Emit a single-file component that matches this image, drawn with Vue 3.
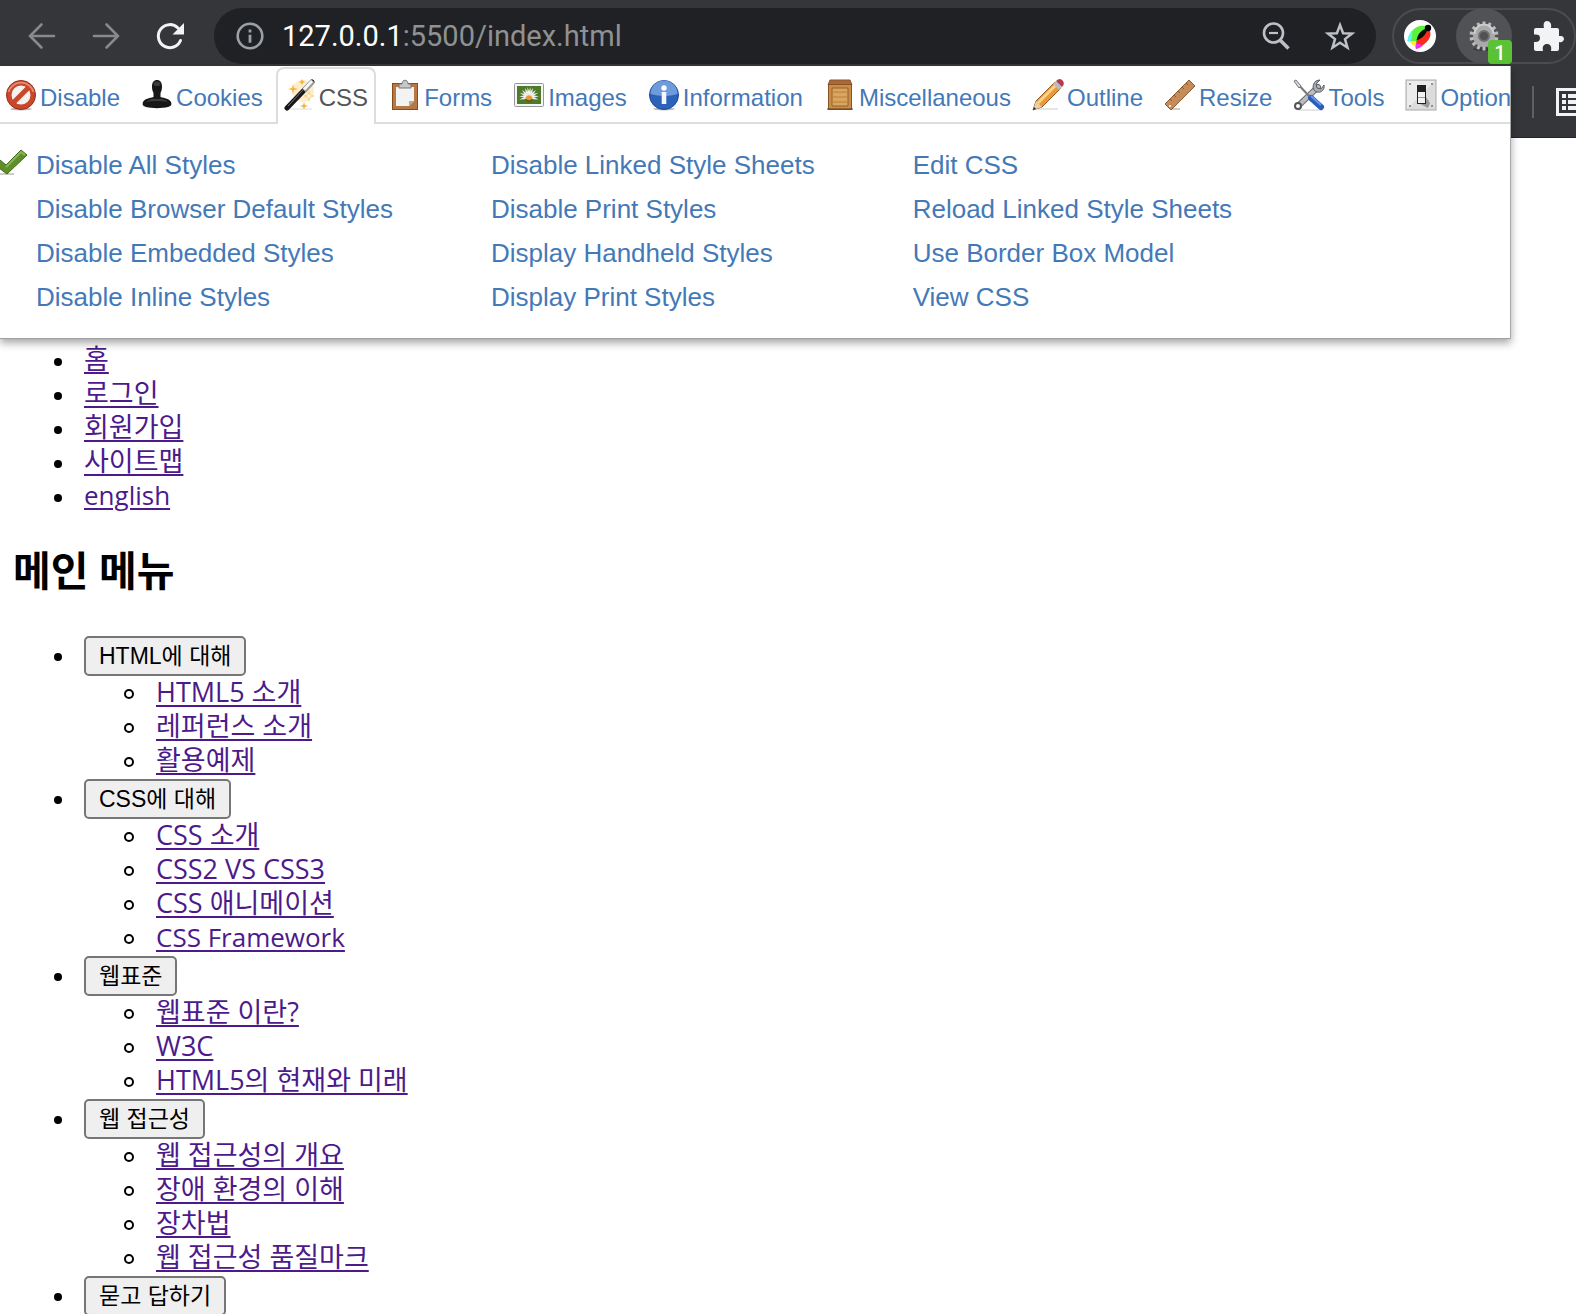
<script setup>
const tabs = ['Disable', 'Cookies', 'CSS', 'Forms', 'Images', 'Information', 'Miscellaneous', 'Outline', 'Resize', 'Tools', 'Options']

const features = [
  ['Disable All Styles', 'Disable Browser Default Styles', 'Disable Embedded Styles', 'Disable Inline Styles'],
  ['Disable Linked Style Sheets', 'Disable Print Styles', 'Display Handheld Styles', 'Display Print Styles'],
  ['Edit CSS', 'Reload Linked Style Sheets', 'Use Border Box Model', 'View CSS'],
]

const utility = [
  { text: '홈' },
  { text: '로그인' },
  { text: '회원가입' },
  { text: '사이트맵' },
  { text: 'english', lang: 'en' },
]

const menu = [
  { title: 'HTML에 대해', items: [{ text: 'HTML5 소개' }, { text: '레퍼런스 소개' }, { text: '활용예제' }] },
  { title: 'CSS에 대해', items: [{ text: 'CSS 소개' }, { text: 'CSS2 VS CSS3' }, { text: 'CSS 애니메이션' }, { text: 'CSS Framework', lang: 'en' }] },
  { title: '웹표준', items: [{ text: '웹표준 이란?' }, { text: 'W3C' }, { text: 'HTML5의 현재와 미래' }] },
  { title: '웹 접근성', items: [{ text: '웹 접근성의 개요' }, { text: '장애 환경의 이해' }, { text: '장차법' }, { text: '웹 접근성 품질마크' }] },
  { title: '묻고 답하기', items: [] },
]

const teeth = Array.from({ length: 14 }, (_, i) => (i * 360) / 14)
const petals = [-105, -85, -65, -45, -25, -8, 8, 25, 45, 65, 85, 105]
</script>

<template>
  <div class="window">
    <header class="chrome">
      <div class="toolbar">
        <button class="nav-button" aria-label="Back">
          <svg viewBox="0 0 32 32"><path d="M28 16H4M15.500 4.500L4 16l11.500 11.500" fill="none" stroke="#88898c" stroke-width="2.600" stroke-linecap="round" /></svg>
        </button>
        <button class="nav-button" aria-label="Forward">
          <svg viewBox="0 0 32 32"><path d="M4 16h24M16.500 4.500L28 16 16.500 27.500" fill="none" stroke="#88898c" stroke-width="2.600" stroke-linecap="round" /></svg>
        </button>
        <button class="nav-button" aria-label="Reload">
          <svg viewBox="0 0 32 32"><path d="M26.500 20.500A11.500 11.500 0 1 1 24 8" fill="none" stroke="#f1f3f4" stroke-width="3" stroke-linecap="round" /><path d="M30 3v11.500H18.500z" fill="#f1f3f4" /></svg>
        </button>

        <div class="address">
          <svg class="icon28" viewBox="0 0 28 28"><circle cx="14" cy="14" r="12.300" fill="none" stroke="#9aa0a6" stroke-width="2.600" /><path d="M12.600 7.500h2.800v3h-2.800zM12.600 12.800h2.800v8h-2.800z" fill="#9aa0a6" /></svg>
          <span class="url"><b>127.0.0.1</b>:5500/index.html</span>
          <button class="address-button" aria-label="Zoom">
            <svg viewBox="0 0 32 32"><circle cx="13.500" cy="13" r="9.500" fill="none" stroke="#bdc1c6" stroke-width="2.600" /><path d="M9 13h9" stroke="#bdc1c6" stroke-width="2.200" /><path d="M20 20l8.500 8.500" stroke="#bdc1c6" stroke-width="3.600" /></svg>
          </button>
          <button class="address-button" aria-label="Bookmark">
            <svg viewBox="0 0 32 32"><path d="M16 5l3.100 8.300 8.900.3-7 5.500 2.500 8.600L16 22.800l-7.500 4.900 2.500-8.600-7-5.500 8.900-.3z" fill="none" stroke="#bdc1c6" stroke-width="2.500" /></svg>
          </button>
        </div>

        <div class="extensions">
          <button class="ext" aria-label="Color picker">
            <svg viewBox="0 0 32 32" class="icon32">
              <circle cx="16" cy="16" r="16" fill="#fff" />
              <path d="M24 7C15 3 6 9 3.500 21l8 2C18 20 22 14 24 7z" fill="#5cf23c" />
              <path d="M3.500 21C4 16 5.500 13 8 10.500c.5 4 0 7-1 11z" fill="#5ff4f1" />
              <path d="M25 8c4 8 0 15-13 21-2-6 3-14 13-21z" fill="#fb2a1c" />
              <path d="M6 21.500l6-.5v5.500c-3-1-5-2.500-6-5z" fill="#ffee2d" />
              <path d="M12 29c-.5-2-.3-4 0-6l7 2.500c-2 2-4.500 3-7 3.500z" fill="#f32df5" />
              <path d="M24 8c-6 1.500-10.500 5.500-11.500 12.500C19 18 22.500 13.500 24 8z" fill="#0a0a0a" />
              <circle cx="24" cy="8" r="3.200" />
            </svg>
          </button>
          <button class="ext active" aria-label="Web Developer">
            <svg viewBox="0 0 32 32" class="icon32">
              <ellipse cx="16" cy="29" rx="11" ry="2" fill="#3d3d40" />
              <g transform="translate(16 16)">
                <rect v-for="a in teeth" :key="a" x="-1.500" y="-14.500" width="3" height="6" fill="#bcbcbc" :transform="`rotate(${a})`" />
                <circle r="8" fill="none" stroke="#a9a9a9" stroke-width="6" />
                <circle r="5" fill="none" stroke="#6f6f6f" stroke-width="2" />
                <path d="M-9.500-2A9.500 9.500 0 0 1 9.500-2" fill="none" stroke="#cfcfcf" stroke-width="2" />
              </g>
            </svg>
            <span class="badge">1</span>
          </button>
          <button class="ext" aria-label="Extensions">
            <svg viewBox="0 0 32 32" class="icon32"><path d="M4 8h8c-1-4 0-7 3-7s5 3 4 7h6q2 0 2 2v6c4-.5 5 1.500 5 3s-2 4-5 3v7q0 2-2 2h-6c1-5-1-7-4-7s-5 2-4 7H4q-2 0-2-2v-7c4 .5 6-1 6-4s-2-4-6-3.500V10q0-2 2-2z" fill="#f1f3f4" /></svg>
          </button>
        </div>
      </div>
      <div class="bookmarks">
        <span class="divider"></span>
        <svg class="reading" viewBox="0 0 32 28"><path d="M1.500 1.500h29v25h-29z" fill="none" stroke="#f1f3f4" stroke-width="3" /><path d="M6 6h4v4H6zM6 12h4v4H6zM6 18h4v4H6zM12 6h15v4H12zM12 12h15v4H12zM12 18h15v4H12z" fill="#f1f3f4" /></svg>
      </div>
    </header>

    <section class="panel">
      <nav class="tabs">
        <a v-for="tab in tabs" :key="tab" href="#" class="tab" :class="{ selected: tab === 'CSS' }">
          <svg class="icon32" viewBox="0 0 32 32">
            <template v-if="tab === 'Disable'">
              <ellipse cx="16" cy="30" rx="11" ry="1.500" fill="#bbb" />
              <circle cx="16" cy="16" r="12" fill="#f4f2f1" stroke="#c9472b" stroke-width="5" />
              <path d="M8 24L24 8" stroke="#c9472b" stroke-width="5" />
              <circle cx="16" cy="16" r="14.500" fill="none" stroke="#9c2a14" stroke-width="1" />
              <path d="M3.500 13A13 13 0 0 1 28.500 13" fill="none" stroke="#e58a70" stroke-width="2" />
            </template>
            <template v-else-if="tab === 'Cookies'">
              <path d="M11 8c0-5 2-7 5-7s5 2 5 7c0 3-1 5-1.500 6v4c4 1 9 2 10.500 5 1 3 0 4-3 5-6 1.500-16 1.500-22 0-3-1-4-2-3-5 1.500-3 6.500-4 10.500-5v-4C12 13 11 11 11 8z" fill="#171717" />
              <path d="M12.500 4c2-2 5-2 7 0l-1 3h-5zM5 23q5-4 9-3h4q4-1 9 3-11-2-22 0z" fill="#3c3c3c" />
            </template>
            <template v-else-if="tab === 'CSS'">
              <circle cx="19" cy="12" r="11" fill="#fbd889" opacity=".45" />
              <path d="M9 5l1 4 4 1-4 1-1 4-1-4-4-1 4-1zM18 0l1 2 2 1-2 1-1 2-1-2-2-1 2-1zM20 23l1 3 3 1-3 1-1 3-1-3-3-1 3-1z" fill="#f5b43b" />
              <path d="M25 12l1 4 4 1-4 1-1 4-1-4-4-1 4-1z" fill="#fff" stroke="#fbd889" />
              <path d="M2 30h26" stroke="#ddd" />
              <path d="M3 29L28 3" stroke="#17171b" stroke-width="5" stroke-linecap="round" />
              <path d="M20 11.500l9-9.500" stroke="#9a9a9a" stroke-width="5" />
              <path d="M20 10.500l8-8.500" stroke="#f5f5f5" stroke-width="3" />
              <path d="M4 27L19 11" stroke="#777" stroke-width="1" />
            </template>
            <template v-else-if="tab === 'Forms'">
              <rect x="3.500" y="4.500" width="25" height="26" fill="#b87843" stroke="#8a4b1c" />
              <path d="M7 8h18v14l-5 5H7z" fill="#f3f3f3" />
              <path d="M25 22l-5 5v-5z" fill="#aaa" />
              <path d="M10 9V5h3c0-5 6-5 6 0h3v4z" fill="#c8c8c8" stroke="#777" />
            </template>
            <template v-else-if="tab === 'Images'">
              <rect x="1.500" y="4.500" width="29" height="23" rx="1" fill="#f6f6f6" stroke="#999" />
              <rect x="4" y="7" width="24" height="18" fill="#4f7a2a" />
              <g transform="translate(16 18)">
                <path v-for="a in petals" :key="a" d="M0 0L-1-5L0-10L1-5z" fill="#f2f2ef" :transform="`rotate(${a})`" />
                <ellipse cx="0" cy="1" rx="3" ry="2.500" fill="#e9962a" />
                <path d="M-3 2q3 3 6 0v1q-3 3-6 0z" fill="#6b3d12" />
              </g>
            </template>
            <template v-else-if="tab === 'Information'">
              <ellipse cx="16" cy="30" rx="11" ry="1.500" fill="#bbb" />
              <circle cx="16" cy="16" r="14.500" fill="#2c62b8" stroke="#1c4a9c" />
              <path d="M2.500 15a13.500 13.500 0 0 1 27 0q-13 4-27 0z" fill="#6d9bdc" />
              <circle cx="16" cy="9" r="2.700" fill="#fff" />
              <path d="M13.700 13h4.600v12h-4.600z" fill="#f4f6fa" />
            </template>
            <template v-else-if="tab === 'Miscellaneous'">
              <path d="M6 1h20l2 5H4z" fill="#a8693a" stroke="#8b5426" />
              <rect x="4.500" y="5.500" width="23" height="25" fill="#c98d49" stroke="#8b5426" />
              <path d="M8 9h16v18H8z" fill="#d9a55f" stroke="#94602a" />
              <path d="M8 13h16M8 18h16M8 23h16" stroke="#b8803f" />
              <path d="M3 30h26" stroke="#6a3c18" />
            </template>
            <template v-else-if="tab === 'Outline'">
              <path d="M6 30h20" stroke="#ccc" />
              <path d="M1 31l3-9L23 3l6 6L10 28z" fill="#e79a3c" stroke="#9b5a1d" />
              <path d="M5 23L24 4l2 2L7 25z" fill="#fbd286" />
              <path d="M1 31l3-9 6 6z" fill="#e8cfae" /><path d="M1 31l1-3 2 2z" fill="#222" />
              <path d="M21 5l3-3 6 6-3 3z" fill="#b9bcc0" />
              <path d="M24 2q4-4 7 0 2 3-1 6z" fill="#b8374a" />
            </template>
            <template v-else-if="tab === 'Resize'">
              <path d="M6 30h10" stroke="#ccc" stroke-width="2" />
              <path d="M1 25L25 1l6 6L7 31z" fill="#c58b58" stroke="#8b5a30" />
              <path d="M6 20l2 2M10 16l2 2M14 12l2 2M18 8l2 2M22 4l2 2" stroke="#8f5d30" />
              <circle cx="6" cy="27" r="1" fill="#fff" />
            </template>
            <template v-else-if="tab === 'Tools'">
              <path d="M5 31h24" stroke="#ccc" />
              <path d="M5 27L25 8" stroke="#666b73" stroke-width="6" stroke-linecap="round" />
              <path d="M5 27L25 8" stroke="#b9bdc2" stroke-width="4" stroke-linecap="round" />
              <circle cx="5" cy="27" r="3" fill="#fff" stroke="#555" stroke-width="2" />
              <path d="M27 1l-4 4 1 4 4 1 3-4c1 5-3 8-7 7-5-1-5-8-1-11q2-1 4-1z" fill="#a9adb2" stroke="#5a5d62" />
              <path d="M2 2l14 15" stroke="#777" stroke-width="2" /><path d="M1 2l2-1 5 6-2 2z" fill="#ddd" stroke="#777" />
              <path d="M18 19l10 9" stroke="#2a5cbb" stroke-width="6" stroke-linecap="round" />
              <path d="M18 17l10 9" stroke="#6597e6" stroke-width="2" />
            </template>
            <template v-else>
              <rect x="1" y="1" width="30" height="30" fill="#dcdcdc" stroke="#aaa" />
              <path d="M2 30L30 2H2z" fill="#ececec" />
              <path d="M21 18l4 6-2 5-8-4z" fill="#999" />
              <rect x="12" y="6" width="9" height="19" fill="#222" />
              <rect x="13" y="13" width="7" height="11" fill="#f2f2f2" /><path d="M13 18.500h7" stroke="#999" />
              <circle cx="5" cy="5" r="1" fill="#777" /><circle cx="27" cy="5" r="1" fill="#777" />
              <circle cx="5" cy="27" r="1" fill="#777" /><circle cx="27" cy="27" r="1" fill="#777" />
            </template>
          </svg>
          <span>{{ tab }}</span>
        </a>
      </nav>
      <div class="features">
        <svg class="check" viewBox="0 0 28 28"><path d="M0 25h14" stroke="#ccc" stroke-width="2" /><path d="M-5 16l5-5 6 5L21 1l6 5L7 25z" fill="#5f8f2b" stroke="#3f6a17" /><path d="M6 18L21 3l4 3" fill="none" stroke="#8bb658" stroke-width="2" /></svg>
        <ul v-for="(column, i) in features" :key="i">
          <li v-for="item in column" :key="item"><a href="#">{{ item }}</a></li>
        </ul>
      </div>
    </section>

    <main class="page">
      <ul class="list">
        <li v-for="link in utility" :key="link.text"><a href="#" :lang="link.lang">{{ link.text }}</a></li>
      </ul>
      <h2>메인 메뉴</h2>
      <ul class="list">
        <li v-for="group in menu" :key="group.title">
          <button class="group">{{ group.title }}</button>
          <ul v-if="group.items.length" class="sublist">
            <li v-for="link in group.items" :key="link.text"><a href="#" :lang="link.lang">{{ link.text }}</a></li>
          </ul>
        </li>
      </ul>
    </main>
  </div>
</template>

<style>
body {
  margin: 0;
  background: #fff;
}
</style>

<style scoped>
.window {
  position: relative;
  height: 100vh;
  overflow: hidden;
}
ul {
  margin: 0;
  padding: 0;
  list-style: none;
}
button {
  margin: 0;
  padding: 0;
  border: 0;
  background: none;
}
svg {
  display: block;
  flex: none;
}
.icon28 {
  width: 28px;
  height: 28px;
}
.icon32 {
  width: 32px;
  height: 32px;
}

/* Browser chrome */
.chrome {
  background: #35363a;
  border-bottom: 1px solid #232427;
}
.toolbar {
  display: flex;
  align-items: center;
  height: 56px;
  padding: 8px 0 2px 26px;
}
.nav-button {
  width: 32px;
  margin-right: 32px;
  flex: none;
}
.nav-button svg {
  width: 32px;
  height: 32px;
}
.address {
  display: flex;
  align-items: center;
  flex: 1;
  height: 56px;
  box-sizing: border-box;
  padding: 0 20px 0 18px;
  margin-left: -4px;
  border-radius: 28px;
  background: #202124;
}
.address .icon28 {
  margin: 0 18px 0 4px;
}
.url {
  flex: 1;
  font: 29px/36px Roboto, sans-serif;
  color: #909193;
}
.url b {
  font-weight: 400;
  color: #fff;
}
.address-button {
  width: 32px;
  margin-left: 32px;
}
.address-button svg {
  width: 32px;
  height: 32px;
}
.extensions {
  display: flex;
  align-items: center;
  flex: none;
  height: 56px;
  box-sizing: border-box;
  margin-left: 16px;
  border: 2px solid #4b4c50;
  border-radius: 28px;
}
.ext {
  position: relative;
  display: flex;
  align-items: center;
  justify-content: center;
  flex: none;
  width: 56px;
  height: 56px;
}
.ext:first-child {
  width: 52px;
  margin-right: 10px;
}
.ext.active {
  border-radius: 28px;
  background: #515256;
}
.ext:last-child {
  margin: 0 -2px 0 8px;
}
.badge {
  position: absolute;
  right: 0;
  bottom: 0;
  width: 24px;
  height: 24px;
  border-radius: 4px;
  background: #5bc236;
  color: #fff;
  font: 500 20px/26px Roboto, sans-serif;
  text-align: center;
}
.bookmarks {
  display: flex;
  align-items: center;
  justify-content: flex-end;
  height: 71px;
  overflow: hidden;
}
.divider {
  width: 2px;
  height: 32px;
  margin-right: 22px;
  background: #5f6064;
}
.reading {
  width: 32px;
  height: 28px;
  margin-right: -12px;
}

/* Extension popup */
.panel {
  position: absolute;
  top: 66px;
  left: 0;
  right: 65px;
  background: #fff;
  border-right: 1px solid #a8a8a8;
  border-bottom: 1px solid #a0a0a0;
  box-shadow: 0 4px 8px rgba(0, 0, 0, 0.35);
  font-family: "Liberation Sans", Arial, sans-serif;
}
.panel a {
  color: #4479b7;
  text-decoration: none;
}
.tabs {
  display: flex;
  gap: 5px;
  height: 57px;
  padding-top: 1px;
  margin-left: -3px;
  overflow: hidden;
  box-shadow: inset 0 -2px #ddd;
}
.tab {
  display: flex;
  flex: none;
  align-items: flex-end;
  gap: 3px;
  height: 58px;
  box-sizing: border-box;
  padding: 0 6px 14px;
  border: 2px solid transparent;
  border-bottom: 0;
  border-radius: 8px 8px 0 0;
  font-size: 24px;
  line-height: 26px;
}
.panel .tab.selected {
  border-color: #ddd;
  background: #fff;
  color: #555;
}
.features {
  position: relative;
  display: flex;
  gap: 98px;
  padding: 19px 36px;
  font-size: 26px;
  line-height: 44px;
  white-space: nowrap;
}
.check {
  position: absolute;
  left: 0;
  top: 25px;
  width: 28px;
  height: 28px;
}

/* Unstyled document */
.page {
  padding: 204px 13px 0;
  color: #000;
  font: 27px/34px "Open Sans", "Noto Sans CJK KR", sans-serif;
}
.page a {
  color: #4c1a8b;
  text-decoration-thickness: 2px;
  text-underline-offset: 3px;
}
.page a:lang(en) {
  font-size: 26px;
}
.list {
  padding-left: 71px;
}
.list li {
  min-height: 34px;
}
.list > li::before {
  content: "";
  display: inline-block;
  width: 8px;
  height: 8px;
  margin: 0 22px 0 -30px;
  border-radius: 4px;
  background: #000;
  vertical-align: 3px;
}
.sublist {
  margin: -2px 0 2px;
  padding-left: 72px;
}
.sublist li {
  height: 34px;
}
.sublist li::before {
  content: "";
  display: inline-block;
  box-sizing: border-box;
  width: 10px;
  height: 10px;
  margin: 0 22px 0 -32px;
  border: 2px solid #000;
  border-radius: 5px;
  vertical-align: 3px;
}
h2 {
  margin: 31px 0 38px;
  font-size: 41px;
  line-height: 55px;
}
.group {
  height: 40px;
  margin-bottom: 1px;
  padding: 0 13px;
  border: 2px solid #767676;
  border-radius: 5px;
  background: #efefef;
  color: #000;
  font: 23px/34px "Liberation Sans", "Noto Sans CJK KR", sans-serif;
  vertical-align: middle;
}
</style>
